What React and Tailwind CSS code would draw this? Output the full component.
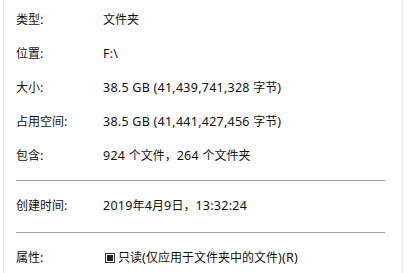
import React from "react";

const font = { fontFamily: '"Segoe UI", "Noto Sans", "Noto Sans CJK SC", sans-serif' };

function T({ text }) {
  const parts = text.split(/([\u3000-\u9fff\uff00-\uffef]+)/);
  return (
    <>
      {parts.map((p, i) =>
        p === "" ? null : /[\u3000-\u9fff\uff00-\uffef]/.test(p) ? (
          <span key={i} className="text-[12px] tracking-normal">{p}</span>
        ) : (
          <span key={i} className="text-[12.5px] tracking-[0.25px]">{p}</span>
        )
      )}
    </>
  );
}

function Row({ label, children, className = "" }) {
  return (
    <div className={"flex items-center h-[34px] " + className}>
      <div className="w-[87px] shrink-0">
        <T text={label} />
      </div>
      <div className="whitespace-nowrap">{children}</div>
    </div>
  );
}

export default function App() {
  return (
    <div
      className="w-[407px] h-[273px] bg-white overflow-hidden text-[12px] text-[#111] flex"
      style={font}
    >
      <div className="w-[3px] shrink-0" />
      <div className="w-[1px] shrink-0 bg-[#ececec]" />
      <div className="flex-1 pl-[12px] pt-[3px]">
        <div className="pr-[17px]">
          <Row label="类型:"><T text="文件夹" /></Row>
          <Row label="位置:"><T text="F:\" /></Row>
          <Row label="大小:"><T text="38.5 GB (41,439,741,328 字节)" /></Row>
          <Row label="占用空间:"><T text="38.5 GB (41,441,427,456 字节)" /></Row>
          <Row label="包含:"><T text="924 个文件，264 个文件夹" /></Row>
          <div className="h-[7px]" />
          <div className="h-[1px] bg-[#a0a0a0]" />
          <Row label="创建时间:" className="h-[51px]"><T text="2019年4月9日，13:32:24" /></Row>
          <div className="h-[1px] bg-[#a0a0a0]" />
          <Row label="属性:" className="h-[50px]">
            <span className="inline-flex items-center gap-[3px] ml-[2px]">
              <span className="w-[10px] h-[10px] border border-[#333] flex items-center justify-center">
                <span className="w-[6px] h-[6px] bg-[#222]" />
              </span>
              <span><T text="只读(仅应用于文件夹中的文件)(R)" /></span>
            </span>
          </Row>
        </div>
      </div>
      <div className="w-[1px] shrink-0 bg-[#ececec]" />
      <div className="w-[4px] shrink-0" />
    </div>
  );
}
